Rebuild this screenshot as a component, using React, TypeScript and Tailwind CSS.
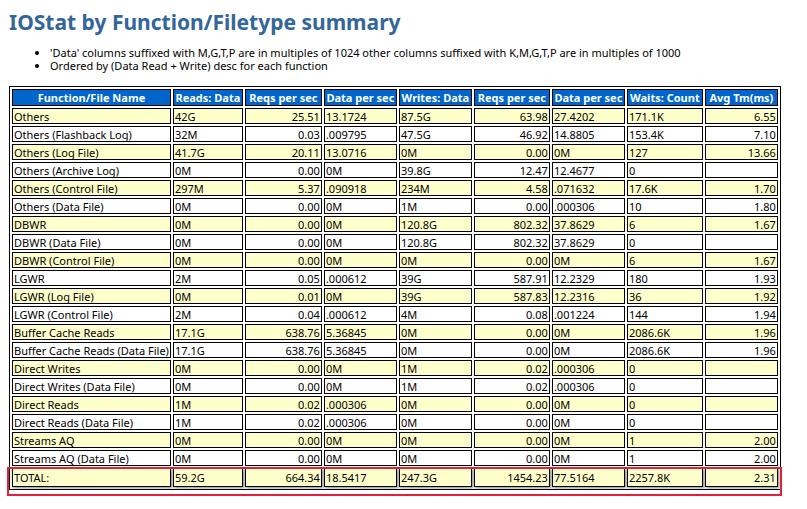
const rows: string[][] = [
["Others","42G","25.51","13.1724","87.5G","63.98","27.4202","171.1K","6.55"],
["Others (Flashback Log)","32M","0.03",".009795","47.5G","46.92","14.8805","153.4K","7.10"],
["Others (Log File)","41.7G","20.11","13.0716","0M","0.00","0M","127","13.66"],
["Others (Archive Log)","0M","0.00","0M","39.8G","12.47","12.4677","0",""],
["Others (Control File)","297M","5.37",".090918","234M","4.58",".071632","17.6K","1.70"],
["Others (Data File)","0M","0.00","0M","1M","0.00",".000306","10","1.80"],
["DBWR","0M","0.00","0M","120.8G","802.32","37.8629","6","1.67"],
["DBWR (Data File)","0M","0.00","0M","120.8G","802.32","37.8629","0",""],
["DBWR (Control File)","0M","0.00","0M","0M","0.00","0M","6","1.67"],
["LGWR","2M","0.05",".000612","39G","587.91","12.2329","180","1.93"],
["LGWR (Log File)","0M","0.01","0M","39G","587.83","12.2316","36","1.92"],
["LGWR (Control File)","2M","0.04",".000612","4M","0.08",".001224","144","1.94"],
["Buffer Cache Reads","17.1G","638.76","5.36845","0M","0.00","0M","2086.6K","1.96"],
["Buffer Cache Reads (Data File)","17.1G","638.76","5.36845","0M","0.00","0M","2086.6K","1.96"],
["Direct Writes","0M","0.00","0M","1M","0.02",".000306","0",""],
["Direct Writes (Data File)","0M","0.00","0M","1M","0.02",".000306","0",""],
["Direct Reads","1M","0.02",".000306","0M","0.00","0M","0",""],
["Direct Reads (Data File)","1M","0.02",".000306","0M","0.00","0M","0",""],
["Streams AQ","0M","0.00","0M","0M","0.00","0M","1","2.00"],
["Streams AQ (Data File)","0M","0.00","0M","0M","0.00","0M","1","2.00"],
];
const total = ["TOTAL:","59.2G","664.34","18.5417","247.3G","1454.23","77.5164","2257.8K","2.31"];
const heads = ["Function/File Name","Reads: Data","Reqs per sec","Data per sec","Writes: Data","Reqs per sec","Data per sec","Waits: Count","Avg Tm(ms)"];
const widths = ["w-[153px]","w-[70px]","w-[77px]","w-[73px]","w-[73px]","w-[76px]","w-[73px]","w-[76px]","w-[73px]"];
const right = [false,false,true,false,false,true,false,false,true];

export default function App() {
  return (
    <div className="w-[807px] h-[509px] bg-white [font-family:'Liberation_Sans',Arial,sans-serif] text-black relative">
      <h1 className="text-[21px] font-bold text-[#336699] leading-none pt-[12px] pl-[9px]">IOStat by Function/Filetype summary</h1>
      <ul className="mt-[13px] ml-[36px] text-[11px] leading-[13px] list-disc pl-[14px]">
        <li>'Data' columns suffixed with M,G,T,P are in multiples of 1024 other columns suffixed with K,M,G,T,P are in multiples of 1000</li>
        <li>Ordered by (Data Read + Write) desc for each function</li>
      </ul>
      <table className="ml-[9px] mt-[14px] border border-black border-separate border-spacing-[2px] text-[11px] leading-[13px]">
        <thead>
          <tr>
            {heads.map((h, i) => (
              <th key={i} className={`${widths[i]} h-[17px] p-0 bg-[#0066cc] text-white font-bold text-center border border-black whitespace-nowrap`}>{h}</th>
            ))}
          </tr>
        </thead>
        <tbody>
          {[...rows, total].map((r, ri) => (
            <tr key={ri} className={ri === rows.length ? "h-[19px]" : "h-[16px]"}>
              {r.map((c, ci) => (
                <td key={ci} className={`p-0 px-[1px] border border-black whitespace-nowrap ${right[ci] ? "text-right" : "text-left"} ${ri % 2 === 0 ? "bg-[#ffffcc]" : "bg-white"} ${ri === rows.length ? "shadow-[1px_1px_3px_rgba(0,0,0,0.5)]" : ""}`}>{c}</td>
              ))}
            </tr>
          ))}
        </tbody>
      </table>
      <div className="absolute left-[7px] top-[467px] w-[775px] h-[29px] border-2 border-[#e3203c]" />
    </div>
  );
}
